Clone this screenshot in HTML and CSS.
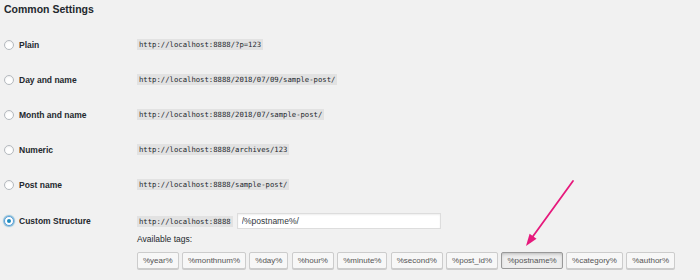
FILE: index.html
```html
<!DOCTYPE html>
<html>
<head>
  <title>Permalink Settings</title>
  <link rel="stylesheet" href="styles.css">
</head>
<body>
  <div class="page">
    <h2>Common Settings</h2>

    <div class="row">
      <label class="choice"><span class="radio"></span>Plain</label>
      <div class="url"><code>http://localhost:8888/?p=123</code></div>
    </div>
    <div class="row">
      <label class="choice"><span class="radio"></span>Day and name</label>
      <div class="url"><code>http://localhost:8888/2018/07/09/sample-post/</code></div>
    </div>
    <div class="row">
      <label class="choice"><span class="radio"></span>Month and name</label>
      <div class="url"><code>http://localhost:8888/2018/07/sample-post/</code></div>
    </div>
    <div class="row">
      <label class="choice"><span class="radio"></span>Numeric</label>
      <div class="url"><code>http://localhost:8888/archives/123</code></div>
    </div>
    <div class="row">
      <label class="choice"><span class="radio"></span>Post name</label>
      <div class="url"><code>http://localhost:8888/sample-post/</code></div>
    </div>

    <div class="row row-custom">
      <label class="choice"><span class="radio checked"></span>Custom Structure</label>
      <div>
        <div class="custom-line">
          <code>http://localhost:8888</code>
          <input type="text" class="structure" value="/%postname%/">
        </div>
        <p class="tags-label">Available tags:</p>
        <div class="tags">
          <button>%year%</button>
          <button>%monthnum%</button>
          <button>%day%</button>
          <button>%hour%</button>
          <button>%minute%</button>
          <button>%second%</button>
          <button>%post_id%</button>
          <button class="active">%postname%</button>
          <button>%category%</button>
          <button>%author%</button>
        </div>
      </div>
    </div>

    <svg class="arrow" width="700" height="280" viewBox="0 0 700 280">
      <line x1="573" y1="181" x2="531" y2="239" stroke="#e6197c" stroke-width="1.8" stroke-linecap="round"/>
      <polygon points="526,246 536.5,238.8 529.6,233.8" fill="#e6197c"/>
    </svg>
  </div>
</body>
</html>
```

FILE: styles.css
```css
body {
  margin: 0;
  font-family: "Liberation Sans", Arial, sans-serif;
  color: #23282d;
  background-color: #f1f1f1;
}

.page {
  position: relative;
  width: 700px;
  height: 280px;
  padding: 0 4px;
  box-sizing: border-box;
}

h2 {
  margin: 0;
  padding-top: 3px;
  height: 24px;
  font-size: 10.5px;
  line-height: 13px;
  font-weight: bold;
}

.row {
  display: grid;
  grid-template-columns: 133px 1fr;
  align-items: center;
  height: 35px;
}

.url {
  display: flex;
  align-items: center;
}

.choice {
  display: flex;
  align-items: center;
  font-size: 8.5px;
  font-weight: bold;
  white-space: nowrap;
}

.radio {
  width: 10px;
  height: 10px;
  margin-right: 5px;
  border: 1px solid #b4b9be;
  border-radius: 50%;
  background-color: #fff;
  box-shadow: inset 0 1px 2px rgba(0, 0, 0, 0.07);
  box-sizing: border-box;
  display: flex;
  align-items: center;
  justify-content: center;
}

.radio.checked {
  border-color: #5b9dd9;
  box-shadow: 0 0 1px 1px rgba(30, 140, 190, 0.5);
}

.radio.checked::before {
  content: "";
  width: 4px;
  height: 4px;
  border-radius: 50%;
  background-color: #1e8cbe;
}

code {
  display: inline-block;
  padding: 1px 2px;
  font-family: "DejaVu Sans Mono", "Liberation Mono", monospace;
  font-size: 7.25px;
  line-height: 9px;
  color: #23282d;
  background-color: #e2e2e2;
}

.row-custom {
  align-items: start;
  height: auto;
  padding-top: 11px;
}

.row-custom .choice {
  height: 16px;
}

.custom-line {
  display: flex;
  align-items: center;
  height: 16px;
}

.structure {
  margin-left: 4px;
  width: 204px;
  height: 16px;
  padding: 0 4px;
  border: 1px solid #ddd;
  box-shadow: inset 0 1px 2px rgba(0, 0, 0, 0.07);
  background-color: #fff;
  font-family: "Liberation Sans", Arial, sans-serif;
  font-size: 8.5px;
  color: #32373c;
  box-sizing: border-box;
}

.tags-label {
  margin: 5px 0 0;
  font-size: 8.5px;
  line-height: 11px;
}

.tags {
  display: flex;
  gap: 3.5px;
  margin-top: 7px;
}

.tags button {
  height: 17px;
  padding: 0 4.9px;
  border: 1px solid #ccc;
  border-radius: 2px;
  background-color: #f7f7f7;
  box-shadow: 0 1px 0 #ccc;
  font-family: "Liberation Sans", Arial, sans-serif;
  font-size: 8px;
  color: #555;
  white-space: nowrap;
}

.tags button.active {
  background-color: #eee;
  border-color: #999;
  box-shadow: inset 0 2px 5px -3px rgba(0, 0, 0, 0.5);
}

.arrow {
  position: absolute;
  top: 0;
  left: 0;
  pointer-events: none;
}
```
